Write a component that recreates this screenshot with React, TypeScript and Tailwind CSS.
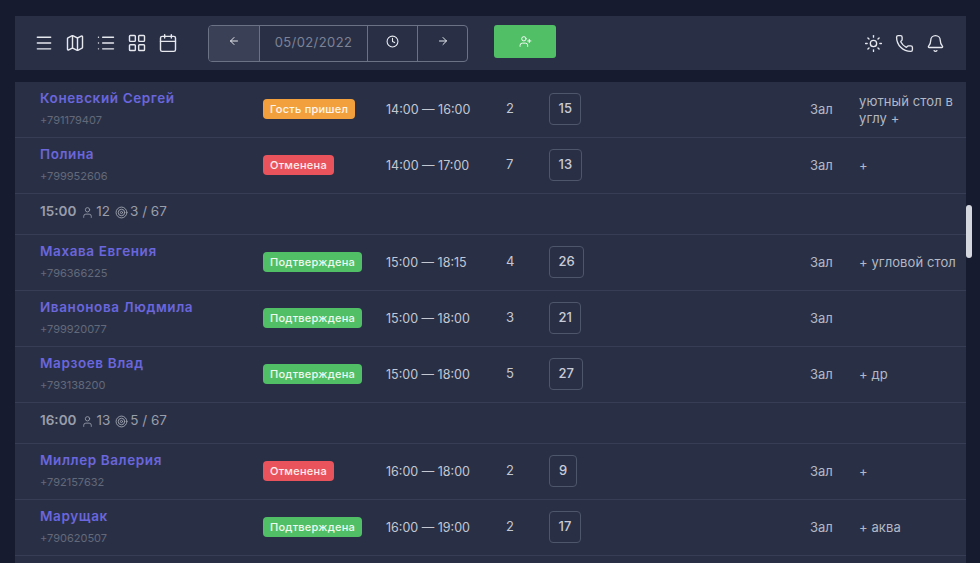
import React from "react";
import { Menu, Map, List, LayoutGrid, Calendar, ArrowLeft, ArrowRight, Clock, UserPlus, Sun, Phone, Bell, User, Target } from "lucide-react";

type Status = "came" | "cancel" | "ok";

type Row = {
  name: string;
  phone: string;
  status: Status;
  time: string;
  guests: number;
  table: number;
  note?: string;
};

type Item = Row | { hour: string; people: number; seats: string };

const statusStyle: Record<Status, { label: string; cls: string }> = {
  came: { label: "Гость пришел", cls: "bg-[#f2a03d]" },
  cancel: { label: "Отменена", cls: "bg-[#e9535b]" },
  ok: { label: "Подтверждена", cls: "bg-[#50bf66]" },
};

const items: Item[] = [
  { name: "Коневский Сергей", phone: "+791179407", status: "came", time: "14:00 — 16:00", guests: 2, table: 15, note: "уютный стол в углу +" },
  { name: "Полина", phone: "+799952606", status: "cancel", time: "14:00 — 17:00", guests: 7, table: 13, note: "+" },
  { hour: "15:00", people: 12, seats: "3 / 67" },
  { name: "Махава Евгения", phone: "+796366225", status: "ok", time: "15:00 — 18:15", guests: 4, table: 26, note: "+ угловой стол" },
  { name: "Иванонова Людмила", phone: "+799920077", status: "ok", time: "15:00 — 18:00", guests: 3, table: 21 },
  { name: "Марзоев Влад", phone: "+793138200", status: "ok", time: "15:00 — 18:00", guests: 5, table: 27, note: "+ др" },
  { hour: "16:00", people: 13, seats: "5 / 67" },
  { name: "Миллер Валерия", phone: "+792157632", status: "cancel", time: "16:00 — 18:00", guests: 2, table: 9, note: "+" },
  { name: "Марущак", phone: "+790620507", status: "ok", time: "16:00 — 19:00", guests: 2, table: 17, note: "+ аква" },
];

const BookingRow = ({ row }: { row: Row }) => {
  const st = statusStyle[row.status];
  return (
    <div className="grid h-[56px] grid-cols-[223px_123px_120px_43px_261px_49px_1fr] items-center border-b border-[#363d54] pb-[2px] pl-[25px]">
      <div className="-mt-[1px]">
        <div className="text-[13.5px] leading-[18px] font-semibold tracking-[0.6px] text-[#6b66dc]">{row.name}</div>
        <div className="mt-[6px] text-[11px] leading-[14px] text-[#636979]">{row.phone}</div>
      </div>
      <div className="flex">
        <span className={`h-[20px] rounded-[4px] px-[7px] text-[11px] leading-[20px] font-medium tracking-[0.25px] text-white/90 ${st.cls}`}>
          {st.label}
        </span>
      </div>
      <div className="mt-[4px] text-[12.5px] text-[#c3c7d2]">{row.time}</div>
      <div className="text-[13px] text-[#c3c7d2]">{row.guests}</div>
      <div className="flex">
        <span className="flex h-[32px] min-w-[28px] items-center justify-center rounded-[4px] border border-[#4e566c] px-[8.5px] text-[13px] font-medium text-[#c9ccd6]">
          {row.table}
        </span>
      </div>
      <div className="mt-[2px] text-[13px] text-[#b4b8c4]">Зал</div>
      <div className="mt-[2px] pr-[8px] text-[13px] leading-[17px] tracking-[0.1px] text-[#b4b8c4]">{row.note}</div>
    </div>
  );
};

const GroupRow = ({ hour, people, seats }: { hour: string; people: number; seats: string }) => (
  <div className="flex h-[41px] items-center gap-[5px] border-b border-[#363d54] pb-[6px] pl-[25px] text-[13.5px] text-[#9a9eab]">
    <span className="font-semibold">{hour}</span>
    <span className="flex items-center gap-[2px]">
      <User className="mt-[3px] h-[13px] w-[13px]" strokeWidth={1.6} />
      {people}
    </span>
    <span className="flex items-center gap-[2px]">
      <Target className="mt-[3px] h-[13px] w-[13px]" strokeWidth={1.8} />
      {seats}
    </span>
  </div>
);

export default function App() {
  return (
    <div className="relative h-[563px] w-[980px] overflow-hidden bg-[#161b30] font-['Inter',sans-serif]">
      <div className="ml-[15px] w-[951px] pt-[16px]">
        <header className="flex h-[54px] items-center bg-[#293046] pl-[19px] text-[#e6e8ee]">
          <div className="flex items-center gap-[11px]">
            <Menu className="h-[20px] w-[20px]" strokeWidth={1.7} />
            <Map className="h-[20px] w-[20px]" strokeWidth={1.7} />
            <List className="h-[20px] w-[20px]" strokeWidth={1.7} />
            <LayoutGrid className="h-[20px] w-[20px]" strokeWidth={1.7} />
            <Calendar className="h-[20px] w-[20px]" strokeWidth={1.7} />
          </div>
          <div className="ml-[30px] flex h-[37px] w-[260px] overflow-hidden rounded-[4px] border border-[#6b7285]">
            <div className="flex w-[51px] items-center justify-center border-r border-[#6b7285] bg-[#3a4055] pb-[4px]">
              <ArrowLeft className="h-[12px] w-[12px]" strokeWidth={2} />
            </div>
            <div className="flex w-[108px] items-center justify-center border-r border-[#6b7285] text-[13px] tracking-[0.4px] text-[#7d8294]">
              05/02/2022
            </div>
            <div className="flex w-[50px] items-center justify-center border-r border-[#6b7285] pb-[4px]">
              <Clock className="h-[13px] w-[13px]" strokeWidth={2} />
            </div>
            <div className="flex flex-1 items-center justify-center pb-[4px]">
              <ArrowRight className="h-[12px] w-[12px]" strokeWidth={2} />
            </div>
          </div>
          <button className="mb-[4px] ml-[26px] flex h-[33px] w-[62px] items-center justify-center rounded-[3px] bg-[#50bf66]">
            <UserPlus className="h-[13px] w-[13px] text-white" strokeWidth={1.7} />
          </button>
          <div className="ml-auto flex items-center gap-[12px] pr-[21px]">
            <Sun className="h-[19px] w-[19px]" strokeWidth={1.7} />
            <Phone className="h-[19px] w-[19px]" strokeWidth={1.7} />
            <Bell className="h-[19px] w-[19px]" strokeWidth={1.7} />
          </div>
        </header>
        <div className="mt-[12px] bg-[#293046]">
          {items.map((item, i) =>
            "hour" in item ? (
              <GroupRow key={i} hour={item.hour} people={item.people} seats={item.seats} />
            ) : (
              <BookingRow key={i} row={item} />
            )
          )}
          <div className="h-[10px]" />
        </div>
      </div>
      <div className="absolute top-[205px] left-[966px] h-[53px] w-[6px] rounded-full bg-[#d5d8de]" />
    </div>
  );
}
